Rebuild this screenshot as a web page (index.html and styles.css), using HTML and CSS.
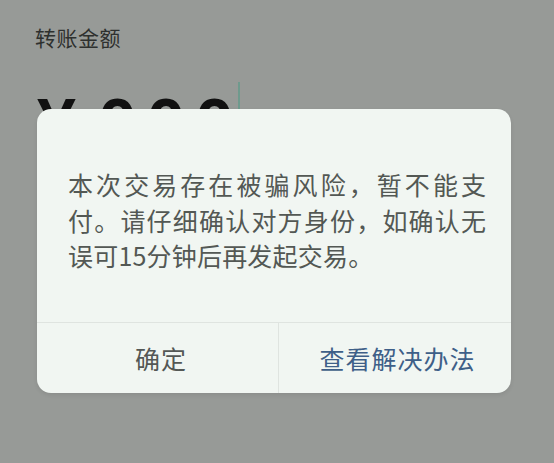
FILE: index.html
```html
<!DOCTYPE html>
<html lang="zh-CN">
<head>
<meta charset="utf-8">
<title>转账</title>
<link rel="stylesheet" href="styles.css">
</head>
<body>
<div class="page">
  <div class="label">转账金额</div>
  <div class="amount">
    <span class="yen">¥</span>
    <span class="digit">0</span>
    <span class="digit">0</span>
    <span class="digit">0</span>
    <span class="cursor"></span>
  </div>
</div>
<div class="dialog">
  <div class="message">
    <span class="line justify">本次交易存在被骗风险，暂不能支</span>
    <span class="line justify">付。请仔细确认对方身份，如确认无</span>
    <span class="line">误可15分钟后再发起交易。</span>
  </div>
  <div class="actions">
    <div class="btn btn-ok">确定</div>
    <div class="btn btn-link">查看解决办法</div>
  </div>
</div>
</body>
</html>
```
FILE: styles.css
```css
html, body {
  margin: 0;
  padding: 0;
}
body {
  width: 554px;
  height: 463px;
  background: #979a97;
  font-family: "Noto Sans CJK SC", "Noto Sans", sans-serif;
  overflow: hidden;
  position: relative;
}
.page {
  padding: 22px 0 0 35px;
}
.label {
  font-size: 21px;
  line-height: 30px;
  letter-spacing: 0.5px;
  color: #2e302e;
}
.amount {
  margin: 37px 0 0 2px;
  height: 70px;
  display: flex;
  align-items: flex-start;
  gap: 9.6px;
  font-family: "Liberation Sans", Arial, sans-serif;
  font-weight: bold;
  font-size: 70px;
  line-height: 70px;
  color: #111;
}
.yen {
  margin-right: 12.5px;
}
.cursor {
  width: 2px;
  height: 60px;
  margin-top: -7px;
  margin-left: -5.5px;
  background: #6f9a8d;
}
.dialog {
  position: absolute;
  left: 37px;
  top: 109px;
  width: 474px;
  background: #f1f6f2;
  border-radius: 14px;
  box-shadow: 0 2px 4px rgba(0, 0, 0, 0.08);
  overflow: hidden;
}
.message {
  padding: 58px 25px 48.5px 31px;
  font-size: 25px;
  line-height: 35.5px;
  letter-spacing: 0.2px;
  color: #535854;
}
.line {
  display: block;
}
.justify {
  text-align: justify;
  text-align-last: justify;
  letter-spacing: 0;
}
.actions {
  display: grid;
  grid-template-columns: 242px 1fr;
  border-top: 1px solid #dfe4e0;
  height: 70px;
}
.btn {
  display: flex;
  align-items: center;
  justify-content: center;
  font-size: 25px;
  letter-spacing: 1px;
}
.btn-ok {
  color: #545855;
  padding-left: 7px;
  border-right: 1px solid #dfe4e0;
}
.btn-link {
  color: #3e5f88;
  padding-left: 5px;
}
```
